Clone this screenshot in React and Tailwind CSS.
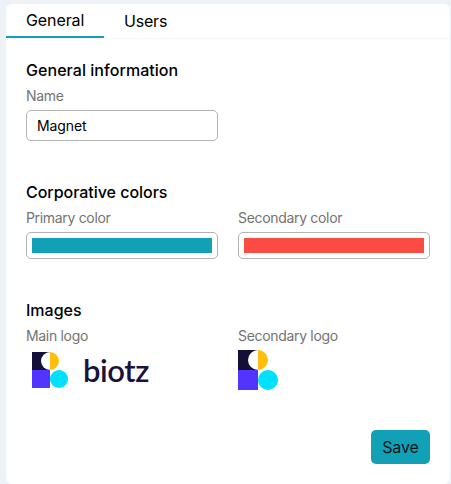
function LogoMark({ className }) {
  return (
    <svg viewBox="0 0 40 40" className={className}>
      <rect width="20" height="20" fill="#140f38" />
      <path d="M20 0a10 10 0 0 0 0 20z" fill="#fff" />
      <path d="M20 0a10 10 0 0 1 0 20z" fill="#ffbf0f" />
      <rect y="20" width="20" height="20" fill="#5034ff" />
      <circle cx="30" cy="30" r="10" fill="#00e1ff" />
    </svg>
  );
}

function Heading({ children, className }) {
  return (
    <h2 className="h-6 text-base leading-6 font-medium whitespace-nowrap text-black">
      <span className={className}>{children}</span>
    </h2>
  );
}

function Label({ children }) {
  return (
    <div className="mt-1 mb-1 h-5 text-sm leading-5 tracking-[-0.32px] whitespace-nowrap text-[#737373]">
      {children}
    </div>
  );
}

export default function App() {
  return (
    <div className="h-[484px] w-[451px] bg-[#eef2f6] pt-1 pr-px pl-1.5 font-['Inter','Liberation_Sans',sans-serif]">
      <div className="flex h-[480px] flex-col rounded-md bg-white">
        <div className="flex h-[35px] border-b border-[#f5f6f7] text-base leading-6 text-black">
          <div className="h-[34px] w-[98px] border-b-2 border-[#12a0b7] pt-1 pl-5 tracking-[-0.1px]">General</div>
          <div className="pt-[5px] pl-5 tracking-[-0.2px]">Users</div>
        </div>

        <div className="flex flex-col px-5 pt-[19px]">
          <section className="mb-[39px]">
            <Heading className="tracking-[0.05px]">General information</Heading>
            <Label>Name</Label>
            <div className="h-[31px] w-48 rounded-[5px] border border-[#b3b3b3] pl-2.5 text-sm leading-[30px] tracking-[-0.1px] text-black">
              Magnet
            </div>
          </section>

          <section className="mb-[39px]">
            <Heading className="tracking-[-0.03px]">Corporative colors</Heading>
            <div className="grid grid-cols-2 gap-5">
              <div>
                <Label>Primary color</Label>
                <div className="h-[27px] rounded-[5px] border border-[#b3b3b3] p-[5px]">
                  <div className="h-[15px] bg-[#12a0b7]" />
                </div>
              </div>
              <div>
                <Label>Secondary color</Label>
                <div className="h-[27px] rounded-[5px] border border-[#b3b3b3] p-[5px]">
                  <div className="h-[15px] bg-[#fc4b42]" />
                </div>
              </div>
            </div>
          </section>

          <section>
            <Heading className="tracking-[0px]">Images</Heading>
            <div className="grid grid-cols-2 gap-5">
              <div>
                <Label>Main logo</Label>
                <div className="flex h-10 items-center pl-1.5">
                  <LogoMark className="size-9" />
                  <span className="ml-[15px] font-['Lato',sans-serif] text-[31px] leading-10 font-semibold tracking-[-0.4px] text-[#19123f]">
                    biotz
                  </span>
                </div>
              </div>
              <div>
                <Label>Secondary logo</Label>
                <LogoMark className="size-10" />
              </div>
            </div>
          </section>

          <button className="mt-10 h-[34px] w-[59px] self-end rounded-[5px] bg-[#12a0b7] text-base leading-6 tracking-[-0.1px] text-[#0b1517]">
            Save
          </button>
        </div>
      </div>
    </div>
  );
}
